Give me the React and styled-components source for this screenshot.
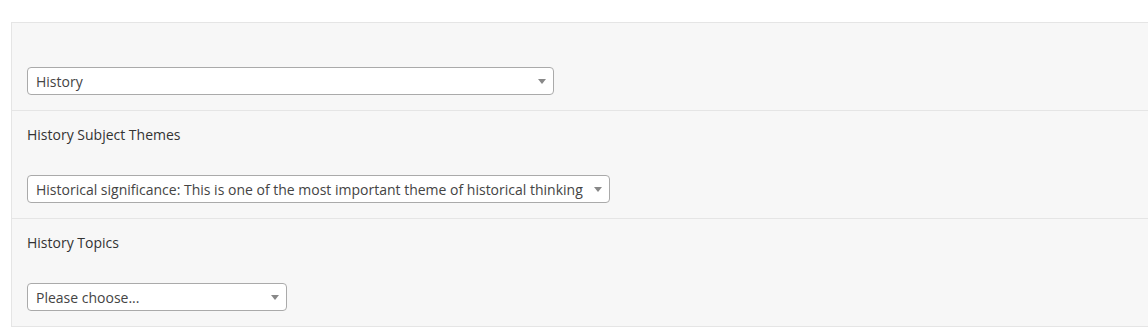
import React from 'react';
import styled, { createGlobalStyle } from 'styled-components';

const GlobalStyle = createGlobalStyle`
    body {
        margin: 0;
        background: #fff;
        font-family: "Open Sans", "Noto Sans", sans-serif;
    }
`;

const Page = styled.div`
    padding: 22px 0 0 11px;
`;

const Panel = styled.div`
    background: #f7f7f7;
    border-top: 1px solid #e5e5e5;
    border-left: 1px solid #e5e5e5;
`;

const Row = styled.div`
    padding: 15px;
    border-bottom: 1px solid #e5e5e5;
`;

const Label = styled.div`
    font-size: 14px;
    line-height: 18px;
    color: #333;
    margin-bottom: 31px;
`;

const Spacer = styled.div`
    height: 29px;
`;

const Select = styled.div`
    box-sizing: border-box;
    display: ${(props) => (props.width ? 'flex' : 'inline-flex')};
    align-items: center;
    width: ${(props) => (props.width ? `${props.width}px` : 'auto')};
    height: 28px;
    padding: 0 26px 0 8px;
    position: relative;
    background: #fff;
    border: 1px solid #aaa;
    border-radius: 4px;
    font-size: 14px;
    color: #444;
    white-space: nowrap;

    &::after {
        content: '';
        position: absolute;
        right: 7px;
        top: 11px;
        border-style: solid;
        border-width: 5px 4px 0 4px;
        border-color: #888 transparent transparent transparent;
    }
`;

const fields = [
    { label: null, value: 'History', width: 527 },
    {
        label: 'History Subject Themes',
        value: 'Historical significance: This is one of the most important theme of historical thinking',
    },
    { label: 'History Topics', value: 'Please choose...', width: 260 },
];

const App = () => (
    <Page>
        <GlobalStyle />
        <Panel>
            {fields.map((field, i) => (
                <Row key={i}>
                    {field.label ? <Label>{field.label}</Label> : <Spacer />}
                    <Select width={field.width}>{field.value}</Select>
                </Row>
            ))}
        </Panel>
    </Page>
);

export default App;
